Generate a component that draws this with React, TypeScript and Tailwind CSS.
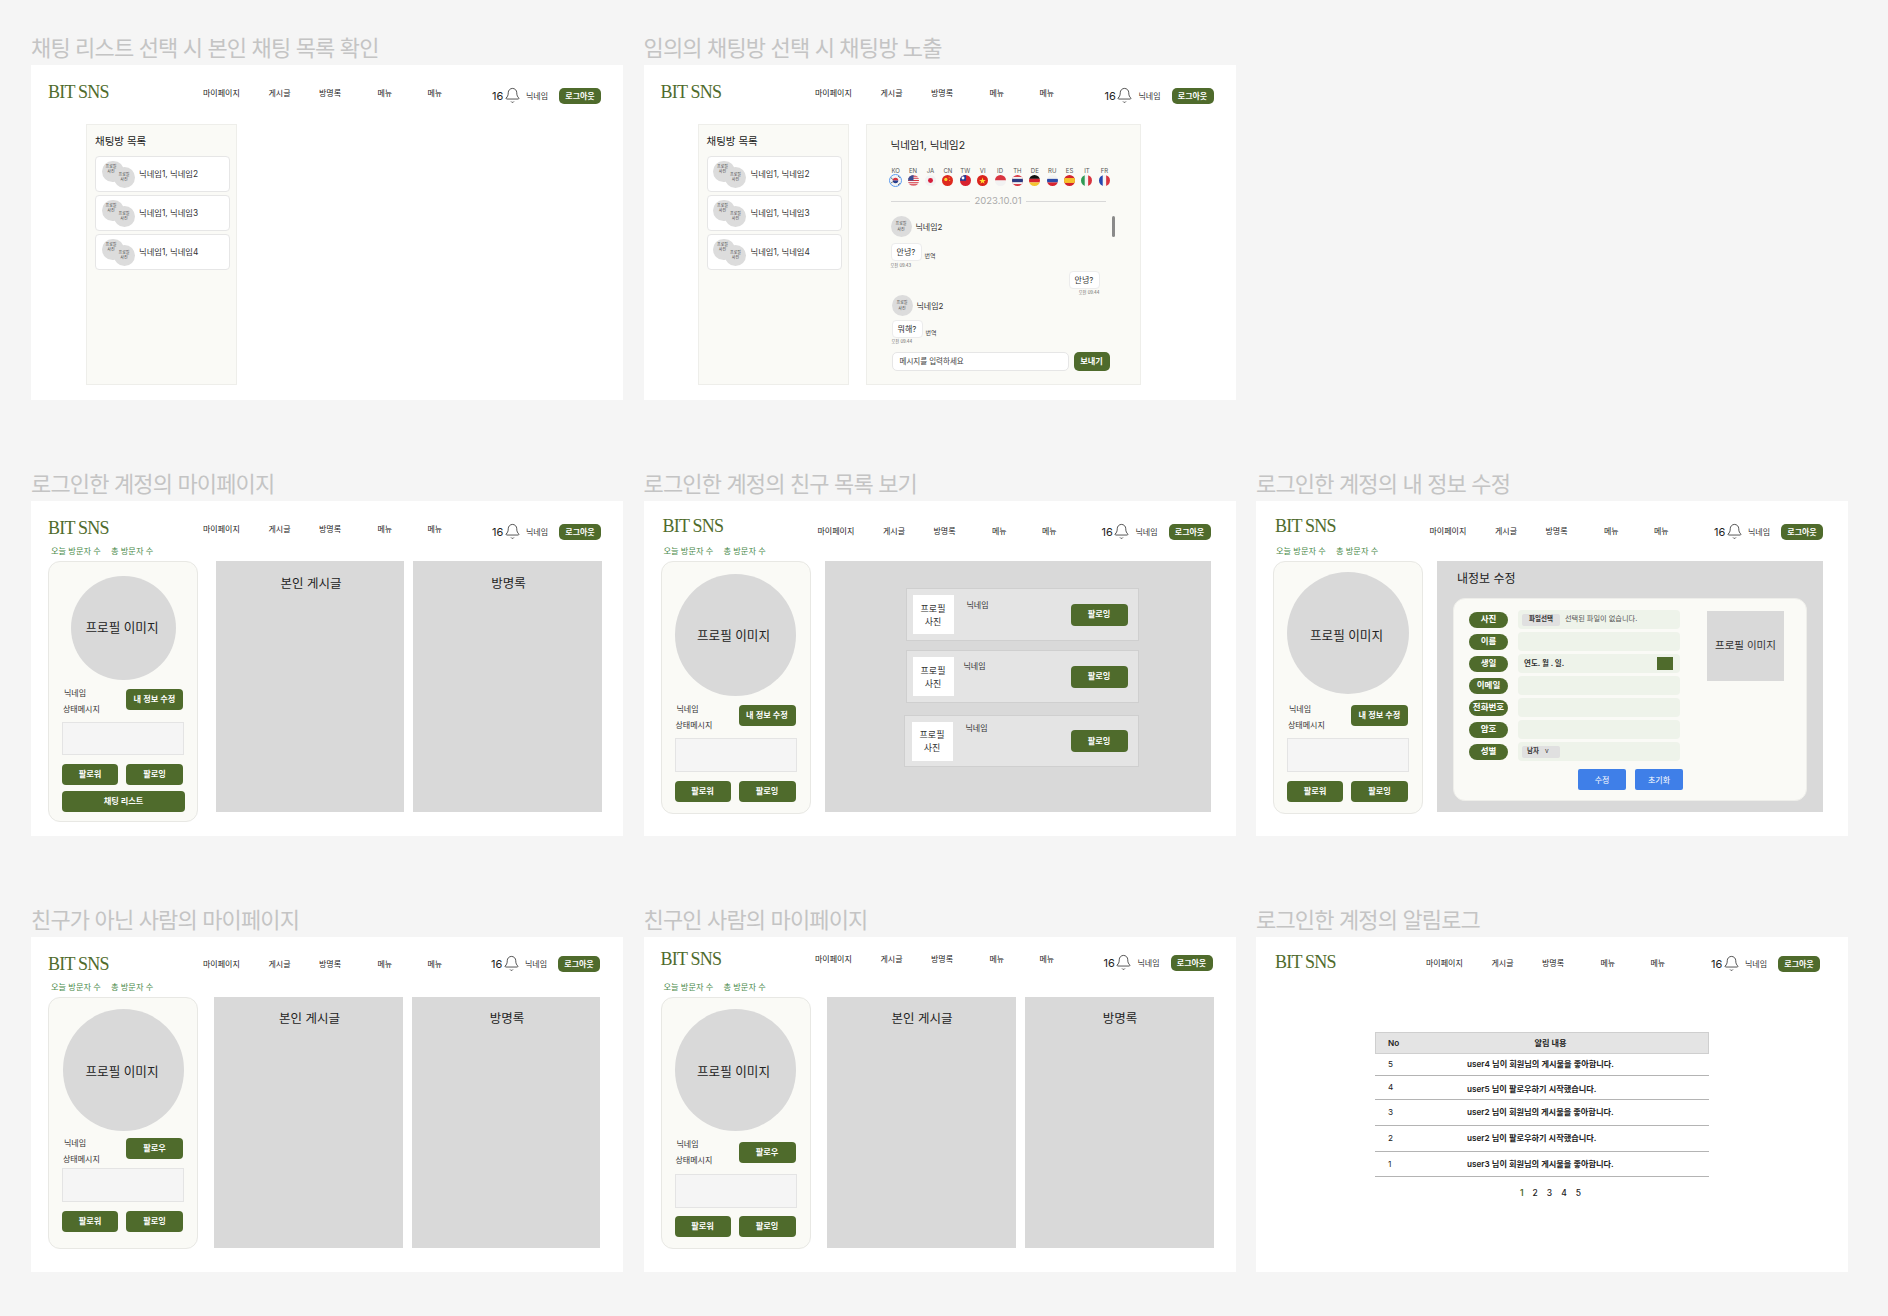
import React from 'react';
import { Bell } from 'lucide-react';

const GREEN = 'bg-[#4f6b2c]';

interface HeaderProps {
  logo: string;
  nav: string;
  right: string;
  className?: string;
}

const Header: React.FC<HeaderProps> = ({ logo, nav, right, className = 'h-[45px]' }) => (
  <div className={`flex items-start shrink-0 ${className}`}>
    <div className={`w-[80px] h-[20px] leading-[20px] text-[18px] tracking-[-0.8px] text-[#4f6b2c] font-['Liberation_Serif',serif] whitespace-nowrap ${logo}`}>BIT SNS</div>
    <div className={`flex w-[250px] h-[10px] leading-[10px] text-[8px] text-[#222] ${nav}`}>
      <span className="w-[65.5px]">마이페이지</span>
      <span className="w-[50.5px]">게시글</span>
      <span className="w-[58.5px]">방명록</span>
      <span className="w-[50px]">메뉴</span>
      <span>메뉴</span>
    </div>
    <div className={`flex items-center h-[16px] ${right}`}>
      <span className="w-[13px] text-[11px] text-[#222]">16</span>
      <Bell size={17} strokeWidth={1} className="-mx-[1.5px] -mt-[2px] text-[#111]" />
      <span className="ml-[7px] w-[33px] text-[8px] text-[#333]">닉네임</span>
      <button className={`w-[42px] h-[16px] rounded-[5px] ${GREEN} text-white text-[8px] font-semibold`}>로그아웃</button>
    </div>
  </div>
);

const Stats = () => (
  <div className="flex h-[10px] leading-[10px] pl-[20px] text-[8.2px] text-[#4a8a4a] shrink-0">
    <span className="w-[60px]">오늘 방문자 수</span>
    <span>총 방문자 수</span>
  </div>
);

const GreenButton: React.FC<{ className: string; children: React.ReactNode }> = ({ className, children }) => (
  <button className={`${GREEN} text-white text-[8.2px] font-semibold rounded-[4px] shrink-0 ${className}`}>{children}</button>
);

interface ProfileProps {
  card: string;
  circle: string;
  info: string;
  infoText: string;
  action: string;
  box: string;
  buttons?: string;
  chat?: boolean;
}

const ProfileCard: React.FC<ProfileProps> = ({ card, circle, info, infoText, action, box, buttons = 'mt-[9px]', chat }) => (
  <div className={`w-[150px] rounded-[12px] border border-[#e8e8e4] bg-[#fafaf6] shrink-0 flex flex-col ${card}`}>
    <div className={`rounded-full bg-[#d9d9d9] flex items-center justify-center pr-[3px] text-[12.6px] text-[#222] shrink-0 ${circle}`}>프로필 이미지</div>
    <div className={`flex justify-between pl-[14px] pr-[14px] shrink-0 ${info}`}>
      <div className={`flex flex-col text-[8px] text-[#333] ${infoText}`}>
        <span className="leading-[16px] pl-[1px]">닉네임</span>
        <span className="leading-[16px]">상태메시지</span>
      </div>
      <GreenButton className="w-[57px] h-[21px]">{action}</GreenButton>
    </div>
    <div className={`ml-[13px] w-[122px] bg-[#f5f5f5] border border-[#e4e4e4] shrink-0 ${box}`} />
    <div className={`flex justify-between pl-[13px] pr-[14px] ${buttons}`}>
      <GreenButton className="w-[56px] h-[21px]">팔로워</GreenButton>
      <GreenButton className="w-[57px] h-[21px]">팔로잉</GreenButton>
    </div>
    {chat && <GreenButton className="ml-[13px] mt-[6px] w-[123px] h-[21px]">채팅 리스트</GreenButton>}
  </div>
);

const GrayPanel: React.FC<{ title: string; className: string; titleClass?: string }> = ({ title, className, titleClass = 'mt-[15px]' }) => (
  <div className={`bg-[#d9d9d9] h-[251px] shrink-0 flex flex-col items-center pl-[2px] ${className}`}>
    <div className={`text-[12.5px] leading-[16px] text-[#222] ${titleClass}`}>{title}</div>
  </div>
);

const MiniAvatar: React.FC<{ className: string }> = ({ className }) => (
  <div className={`rounded-full bg-[#dcdcdc] flex items-center justify-center text-center text-[4px] leading-[5.5px] text-[#444] ${className}`}>
    프로필<br />사진
  </div>
);

const ChatList: React.FC<{ className: string }> = ({ className }) => (
  <div className={`w-[151px] h-[261px] bg-[#fafaf6] border border-[#eeeeea] shrink-0 pl-[8px] ${className}`}>
    <div className="mt-[11px] h-[12px] leading-[12px] text-[10.5px] text-[#222]">채팅방 목록</div>
    <div className="mt-[8px] flex flex-col gap-[3.5px]">
      {['닉네임1, 닉네임2', '닉네임1, 닉네임3', '닉네임1, 닉네임4'].map(name => (
        <div key={name} className="relative w-[135px] h-[35.5px] bg-white border border-[#e6e6e6] rounded-[4px] flex items-center pt-[1px]">
          <MiniAvatar className="absolute left-[5.5px] top-[3.5px] w-[22px] h-[21px] pb-[4px] pr-[3px]" />
          <MiniAvatar className="absolute left-[17.5px] top-[9.5px] w-[21px] h-[21px]" />
          <span className="ml-[43px] text-[8.3px] text-[#333]">{name}</span>
        </div>
      ))}
    </div>
  </div>
);

const Flag: React.FC<{ code: string }> = ({ code }) => {
  const shapes: Record<string, React.ReactNode> = {
    KO: <><rect width="20" height="20" fill="#f4f4f4" /><path d="M5 10a5 5 0 0 1 10 0z" fill="#d8343f" /><path d="M5 10a5 5 0 0 0 10 0z" fill="#25408f" /><path d="M2 5l3 3M15 2l3 3M2 15l3-3M15 18l3-3" stroke="#222" strokeWidth="1.4" /></>,
    EN: <><rect width="20" height="20" fill="#f4f4f4" /><path d="M0 2h20M0 6h20M0 10h20M0 14h20M0 18h20" stroke="#d8343f" strokeWidth="2" /><rect width="10" height="10" fill="#3b4f94" /></>,
    JA: <><rect width="20" height="20" fill="#f2f2f2" /><circle cx="10" cy="10" r="4.5" fill="#d61f3c" /></>,
    CN: <><rect width="20" height="20" fill="#de2a1f" /><circle cx="7" cy="8" r="3" fill="#ffd62e" /><circle cx="13" cy="5" r="1" fill="#ffd62e" /><circle cx="14" cy="10" r="1" fill="#ffd62e" /></>,
    TW: <><rect width="20" height="20" fill="#d8232f" /><rect width="11" height="10.5" fill="#24409a" /><circle cx="5.5" cy="5.5" r="2.6" fill="#fff" /></>,
    VI: <><rect width="20" height="20" fill="#da251d" /><path d="M10 4.5l1.5 4.5h4.5l-3.6 2.7 1.4 4.4-3.8-2.7-3.8 2.7 1.4-4.4L4 9h4.5z" fill="#ffdf2e" /></>,
    ID: <><rect width="20" height="10" fill="#d9343f" /><rect y="10" width="20" height="10" fill="#f2f2f2" /></>,
    TH: <><rect width="20" height="20" fill="#d8343f" /><rect y="3.5" width="20" height="13" fill="#f4f4f4" /><rect y="7" width="20" height="6" fill="#2d3a80" /></>,
    DE: <><rect width="20" height="7" fill="#111" /><rect y="7" width="20" height="6.5" fill="#d8232f" /><rect y="13.5" width="20" height="6.5" fill="#f4c430" /></>,
    RU: <><rect width="20" height="7" fill="#f2f2f2" /><rect y="7" width="20" height="6.5" fill="#2b4aa8" /><rect y="13.5" width="20" height="6.5" fill="#d8232f" /></>,
    ES: <><rect width="20" height="20" fill="#d3242c" /><rect y="5.5" width="20" height="9" fill="#f6c22c" /></>,
    IT: <><rect width="7" height="20" fill="#2f9a55" /><rect x="7" width="6" height="20" fill="#f4f4f4" /><rect x="13" width="7" height="20" fill="#d8343f" /></>,
    FR: <><rect width="7" height="20" fill="#2547b0" /><rect x="7" width="6" height="20" fill="#f4f4f4" /><rect x="13" width="7" height="20" fill="#d8343f" /></>,
  };
  const selected = code === 'KO';
  return (
    <div className={`w-[11px] h-[11px] rounded-full overflow-hidden ${selected ? 'outline outline-1 outline-[#5b9bf0]' : ''}`}>
      <svg viewBox="0 0 20 20" width="11" height="11">{shapes[code]}</svg>
    </div>
  );
};

const LANGS = ['KO', 'EN', 'JA', 'CN', 'TW', 'VI', 'ID', 'TH', 'DE', 'RU', 'ES', 'IT', 'FR'];

const Bubble: React.FC<{ text: string }> = ({ text }) => (
  <div className="w-[31px] h-[18px] bg-white border border-[#ececec] rounded-[4px] flex items-center justify-center text-[8px] text-[#333]">{text}</div>
);

interface IncomingProps {
  text: string;
  time: string;
  offset: string;
  topGap: string;
  bubbleGap: string;
  timeGap: string;
}

const Incoming: React.FC<IncomingProps> = ({ text, time, offset, topGap, bubbleGap, timeGap }) => (
  <div className={offset}>
    <div className={`flex items-center h-[21px] ${topGap}`}>
      <MiniAvatar className="w-[21px] h-[21px]" />
      <span className="ml-[4px] text-[8px] text-[#333]">닉네임2</span>
    </div>
    <div className={`flex items-end ${bubbleGap}`}>
      <Bubble text={text} />
      <span className="ml-[3px] mb-[1px] text-[6px] leading-[8px] text-[#444]">번역</span>
    </div>
    <div className={`h-[4px] leading-[4px] text-[4.2px] text-[#666] ${timeGap}`}>{time}</div>
  </div>
);

const ChatRoom = () => (
  <div className="relative ml-[17px] w-[275px] h-[261px] bg-[#fafaf6] border border-[#eeeeea] shrink-0 flex flex-col">
    <div className="ml-[24px] mt-[15px] h-[12px] leading-[12px] text-[10.5px] text-[#222]">닉네임1, 닉네임2</div>
    <div className="flex ml-[20.5px] mt-[16px] w-[226px]">
      {LANGS.map(code => (
        <div key={code} className="w-[17.4px] flex flex-col items-center">
          <span className="h-[6px] leading-[6px] text-[6px] text-[#555]">{code}</span>
          <div className="mt-[0.5px]"><Flag code={code} /></div>
        </div>
      ))}
    </div>
    <div className="flex items-center ml-[24px] w-[215px] h-[10px] mt-[10.5px] gap-[4px]">
      <div className="flex-1 h-px bg-[#d8d8d8]" />
      <span className="text-[9.5px] text-[#aaaaaa]">2023.10.01</span>
      <div className="flex-1 h-px bg-[#d8d8d8]" />
    </div>
    <div className="absolute left-[245px] top-[91px] w-[3px] h-[21px] rounded-full bg-[#8a8a8a]" />
    <Incoming text="안녕?" time="오전 09:43" offset="ml-[24px]" topGap="mt-[10px]" bubbleGap="mt-[6px]" timeGap="mt-[3px]" />
    <div className="self-end mr-[40px] mt-[3px] flex flex-col items-end">
      <Bubble text="안녕?" />
      <div className="mt-[2px] h-[4px] leading-[4px] text-[4.2px] text-[#666]">오전 09:44</div>
    </div>
    <Incoming text="뭐해?" time="오전 09:44" offset="ml-[25px]" topGap="mt-0" bubbleGap="mt-[4px]" timeGap="mt-[2px]" />
    <div className="flex ml-[25px] mt-[8px] gap-[5px]">
      <div className="w-[177px] h-[19px] bg-white border border-[#e6e6e6] rounded-[5px] pl-[7px] flex items-center text-[7.5px] text-[#444]">메시지를 입력하세요</div>
      <GreenButton className="w-[36px] h-[19px] rounded-[5px]">보내기</GreenButton>
    </div>
  </div>
);

const FriendRow: React.FC<{ className: string; boxClass: string; nickClass: string }> = ({ className, boxClass, nickClass }) => (
  <div className={`flex items-center bg-[#e4e4e4] border border-[#cfcfcf] pr-[10px] ${className}`}>
    <div className={`w-[41px] h-[39px] bg-white flex items-center justify-center text-center text-[9px] leading-[13px] text-[#333] shrink-0 ${boxClass}`}>프로필<br />사진</div>
    <span className={`self-start text-[8px] leading-[10px] text-[#333] ${nickClass}`}>닉네임</span>
    <GreenButton className="ml-auto w-[57px] h-[22px]">팔로잉</GreenButton>
  </div>
);

const FORM_LABELS = ['사진', '이름', '생일', '이메일', '전화번호', '암호', '성별'];

const FormField: React.FC<{ label: string }> = ({ label }) => (
  <div className="flex items-center h-[19px]">
    <div className={`w-[39px] h-[16px] rounded-full ${GREEN} text-white text-[8.5px] font-semibold flex items-center justify-center whitespace-nowrap shrink-0`}>{label}</div>
    <div className="ml-[10px] w-[162px] h-[19px] rounded-[4px] bg-[#eef3ea] flex items-center">
      {label === '사진' && (
        <>
          <span className="ml-[4px] w-[38px] h-[12px] rounded-[2px] bg-[#e0e0e0] flex items-center justify-center text-[6.5px] font-semibold text-[#333]">파일선택</span>
          <span className="ml-[5px] text-[7.2px] text-[#555]">선택된 파일이 없습니다.</span>
        </>
      )}
      {label === '생일' && (
        <>
          <span className="ml-[6px] text-[7.5px] font-semibold text-[#333]">연도. 월 . 일.</span>
          <span className={`ml-auto mr-[7px] w-[16px] h-[13px] ${GREEN}`} />
        </>
      )}
      {label === '성별' && (
        <span className="ml-[4px] w-[38px] h-[12px] rounded-[2px] bg-[#e0e0e0] flex items-center pl-[5px] gap-[6px] text-[6.5px] font-semibold text-[#333]">남자 <span className="font-normal">v</span></span>
      )}
    </div>
  </div>
);

const EditPanel = () => (
  <div className="ml-[14px] w-[386px] h-[251px] bg-[#d9d9d9] shrink-0 flex flex-col">
    <div className="ml-[20px] mt-[11px] h-[14px] leading-[14px] text-[12px] text-[#222]">내정보 수정</div>
    <div className="ml-[16px] mt-[12px] w-[354px] h-[203px] rounded-[12px] bg-[#fafaf6] border border-[#eeeeea] flex pt-[11px] pl-[15px]">
      <div className="flex flex-col gap-[3px]">
        {FORM_LABELS.map(label => <FormField key={label} label={label} />)}
        <div className="flex ml-[109px] mt-[5px] gap-[9px]">
          <button className="w-[48px] h-[21px] rounded-[2px] bg-[#3f7fe8] text-white text-[8px]">수정</button>
          <button className="w-[48px] h-[21px] rounded-[2px] bg-[#3f7fe8] text-white text-[8px]">초기화</button>
        </div>
      </div>
      <div className="ml-[24px] w-[77px] h-[70px] mt-[1px] bg-[#d9d9d9] flex items-center justify-center text-[10.5px] text-[#333] shrink-0">프로필 이미지</div>
    </div>
  </div>
);

const LOG_ROWS = [
  { no: '5', text: 'user4 님이 회원님의 게시물을 좋아합니다.', h: 'h-[22px]', pad: '' },
  { no: '4', text: 'user5 님이 팔로우하기 시작했습니다.', h: 'h-[24px]', pad: 'pt-[4px]' },
  { no: '3', text: 'user2 님이 회원님의 게시물을 좋아합니다.', h: 'h-[26px]', pad: '' },
  { no: '2', text: 'user2 님이 팔로우하기 시작했습니다.', h: 'h-[26px]', pad: '' },
  { no: '1', text: 'user3 님이 회원님의 게시물을 좋아합니다.', h: 'h-[25px]', pad: '' },
];

const LogTable = () => (
  <div className="ml-[119px] mt-[50px] w-[334px] flex flex-col text-[8.2px] text-[#222]">
    <div className="relative h-[22px] bg-[#e4e4e4] border border-[#cfcfcf] flex items-center justify-center font-semibold">
      <span className="absolute left-[12px]">No</span>
      <span className="ml-[17px]">알림 내용</span>
    </div>
    {LOG_ROWS.map(row => (
      <div key={row.no} className={`flex items-center border-b border-[#b4b4b4] ${row.h}`}>
        <span className="w-[92px] pl-[13px]">{row.no}</span>
        <span className={`font-semibold ${row.pad}`}>{row.text}</span>
      </div>
    ))}
    <div className="mt-[10px] flex justify-center gap-[9px] ml-[17px] text-[8.5px] font-medium">
      <span className="text-[#4f6b2c] font-semibold">1</span><span>2</span><span>3</span><span>4</span><span>5</span>
    </div>
  </div>
);

const Screen: React.FC<{ title: string; children: React.ReactNode }> = ({ title, children }) => (
  <div className="flex flex-col">
    <div className="h-[34px] leading-[34px] text-[22px] tracking-[-0.85px] text-[#c4c4c4] whitespace-nowrap">{title}</div>
    <div className="h-[335px] bg-white flex flex-col overflow-hidden">{children}</div>
  </div>
);

export default function App() {
  return (
    <div className="min-h-screen bg-[#f5f5f5] pl-[31px] pt-[31px] font-['Inter','Noto_Sans_CJK_KR',sans-serif]">
      <div className="grid grid-cols-[592px_592px_592px] gap-x-[20.5px] gap-y-[67px]">
        <Screen title="채팅 리스트 선택 시 본인 채팅 목록 확인">
          <Header logo="ml-[17px] mt-[17px]" nav="ml-[75px] mt-[23px]" right="ml-[39px] mt-[23px]" className="h-[59px]" />
          <div className="flex pl-[55px]"><ChatList className="" /></div>
        </Screen>

        <Screen title="임의의 채팅방 선택 시 채팅방 노출">
          <Header logo="ml-[17px] mt-[17px]" nav="ml-[74.5px] mt-[23px]" right="ml-[39.5px] mt-[23px]" className="h-[59px]" />
          <div className="flex pl-[54px]"><ChatList className="" /><ChatRoom /></div>
        </Screen>

        <div />

        <Screen title="로그인한 계정의 마이페이지">
          <Header logo="ml-[17px] mt-[17px]" nav="ml-[75px] mt-[23px]" right="ml-[39px] mt-[23px]" />
          <Stats />
          <div className="flex pl-[17px] mt-[5px]">
            <ProfileCard card="h-[261px]" circle="mt-[14px] ml-[22px] w-[105px] h-[104px]" info="mt-[9px] h-[33px]" infoText="-mt-[4px]" action="내 정보 수정" box="h-[33px]" chat />
            <GrayPanel title="본인 게시글" className="ml-[18px] w-[188px]" />
            <GrayPanel title="방명록" className="ml-[9px] w-[189px]" />
          </div>
        </Screen>

        <Screen title="로그인한 계정의 친구 목록 보기">
          <Header logo="ml-[19px] mt-[15px]" nav="ml-[75px] mt-[25px]" right="ml-[34px] mt-[23px]" />
          <Stats />
          <div className="flex pl-[17px] mt-[5px]">
            <ProfileCard card="h-[253px]" circle="mt-[12px] ml-[13px] w-[121px] h-[122px] pt-[2px]" info="mt-[9px] h-[33px]" infoText="-mt-[4px]" action="내 정보 수정" box="h-[34px]" />
            <div className="ml-[14px] w-[386px] h-[251px] bg-[#d9d9d9] shrink-0 flex flex-col">
              <FriendRow className="ml-[81px] mt-[27px] w-[233px] h-[53px]" boxClass="ml-[6px]" nickClass="ml-[13px] mt-[11px]" />
              <FriendRow className="ml-[81px] mt-[9px] w-[233px] h-[53px]" boxClass="ml-[6px]" nickClass="ml-[10px] mt-[10px]" />
              <FriendRow className="ml-[79px] mt-[12px] w-[235px] h-[52px]" boxClass="ml-[7px]" nickClass="ml-[13px] mt-[7px]" />
            </div>
          </div>
        </Screen>

        <Screen title="로그인한 계정의 내 정보 수정">
          <Header logo="ml-[19px] mt-[15px]" nav="ml-[74.5px] mt-[25px]" right="ml-[34.5px] mt-[23px]" />
          <Stats />
          <div className="flex pl-[17px] mt-[5px]">
            <ProfileCard card="h-[253px]" circle="mt-[10px] ml-[13px] w-[122px] h-[122px] pt-[6px]" info="mt-[11px] h-[33px]" infoText="-mt-[4px]" action="내 정보 수정" box="h-[34px]" />
            <EditPanel />
          </div>
        </Screen>

        <Screen title="친구가 아닌 사람의 마이페이지">
          <Header logo="ml-[17px] mt-[17px]" nav="ml-[75px] mt-[22px]" right="ml-[38px] mt-[19px]" />
          <Stats />
          <div className="flex pl-[17px] mt-[5px]">
            <ProfileCard card="h-[252px]" circle="mt-[11px] ml-[14px] w-[121px] h-[122px] pt-[4px]" info="mt-[7px] h-[30px]" infoText="-mt-[3px]" action="팔로우" box="h-[34px]" />
            <GrayPanel title="본인 게시글" className="ml-[16px] w-[189px]" titleClass="mt-[14px]" />
            <GrayPanel title="방명록" className="ml-[9px] w-[188px]" titleClass="mt-[14px]" />
          </div>
        </Screen>

        <Screen title="친구인 사람의 마이페이지">
          <Header logo="ml-[17px] mt-[12px]" nav="ml-[74.5px] mt-[17px]" right="ml-[38.5px] mt-[18px]" />
          <Stats />
          <div className="flex pl-[17px] mt-[5px]">
            <ProfileCard card="h-[252px]" circle="mt-[11px] ml-[13px] w-[121px] h-[122px] pt-[4px]" info="mt-[11px] h-[32px]" infoText="-mt-[6px]" action="팔로우" box="h-[34px]" buttons="mt-[8px]" />
            <GrayPanel title="본인 게시글" className="ml-[16px] w-[189px]" titleClass="mt-[14px]" />
            <GrayPanel title="방명록" className="ml-[9px] w-[189px]" titleClass="mt-[14px]" />
          </div>
        </Screen>

        <Screen title="로그인한 계정의 알림로그">
          <Header logo="ml-[19px] mt-[15px]" nav="ml-[71px] mt-[21px]" right="ml-[35px] mt-[19px]" />
          <LogTable />
        </Screen>
      </div>
    </div>
  );
}
